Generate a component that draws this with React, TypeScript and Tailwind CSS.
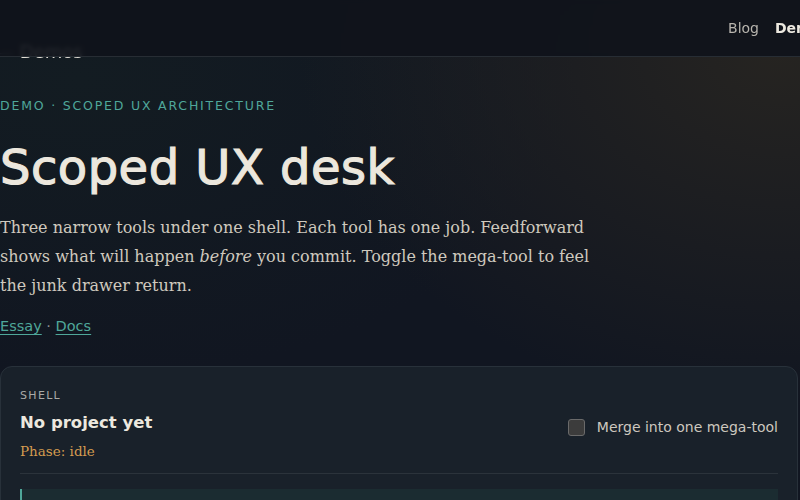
import React, { useState } from 'react'

const sans = "font-['DejaVu_Sans',sans-serif]"
const serif = "font-['DejaVu_Serif',serif]"

const Header: React.FC = () => (
  <div className="absolute top-0 left-0 right-0 h-[57px] bg-[#0f131b]/90 border-b border-[#272d34] backdrop-blur-[2px] flex items-center justify-end gap-4 overflow-hidden">
    <span className={`${sans} text-[14px] text-[#b8b5ae]`}>Blog</span>
    <span className={`${sans} text-[14px] font-bold text-[#ece8df] w-[25px] overflow-hidden whitespace-nowrap`}>Demos</span>
  </div>
)

const App: React.FC = () => {
  const [merged, setMerged] = useState(false)

  return (
    <div className="relative w-[800px] h-[500px] overflow-hidden bg-[#111621] bg-[radial-gradient(ellipse_480px_360px_at_780px_50px,#262421_0%,rgba(17,22,33,0)_100%),radial-gradient(ellipse_500px_300px_at_80px_80px,#131c22_0%,rgba(17,22,33,0)_100%)]">
      <div className="flex flex-col">
        {/* back link, sits under the sticky header */}
        <div className={`${sans} text-[18px] text-[#e4e0d8] pt-[40px] leading-[24px] blur-[0.6px] -ml-[4px]`}>
          <span className="text-[#6d737a]">—</span> Demos
        </div>

        <div className={`${sans} mt-[34px] text-[12.5px] tracking-[0.145em] text-[#4fa79a] leading-[16px]`}>
          DEMO · SCOPED UX ARCHITECTURE
        </div>

        <h1 className={`${sans} mt-[26px] text-[48px] leading-[54px] font-normal text-[#ece7dd] tracking-[0.01em] [-webkit-text-stroke:1.2px_#ece7dd]`}>
          Scoped UX desk
        </h1>

        <p className={`${serif} mt-[19px] text-[16px] leading-[29px] text-[#cfc9be] w-[610px]`}>
          Three narrow tools under one shell. Each tool has one job. Feedforward shows what will happen <em>before</em> you commit. Toggle the mega-tool to feel the junk drawer return.
        </p>

        <div className={`${sans} mt-[16px] text-[14.5px] text-[#4fa79a] leading-[20px]`}>
          <a className="underline underline-offset-[3px] decoration-[#4fa79a]">Essay</a>
          <span className="text-[#8a8f94]"> · </span>
          <a className="underline underline-offset-[3px] decoration-[#4fa79a]">Docs</a>
        </div>

        {/* shell card */}
        <div className="mt-[30px] w-[798px] rounded-xl border border-[#28313a] bg-[#19212a] px-[19px] pt-[22px]">
          <div className={`${sans} text-[11px] tracking-[0.12em] text-[#a9aaa7] leading-[14px]`}>SHELL</div>
          <div className="flex items-start justify-between">
            <div>
              <div className={`${sans} mt-[9px] text-[16.5px] font-bold text-[#ece8df] leading-[22px]`}>No project yet</div>
              <div className={`${serif} mt-[8px] text-[13.5px] text-[#d49c50] leading-[18px]`}>Phase: idle</div>
            </div>
            <label className="mt-[15px] flex items-center gap-[12px] cursor-pointer">
              <span
                onClick={() => setMerged(!merged)}
                className="w-[17px] h-[17px] rounded-[3px] border border-[#6a6a6a] bg-[#3c3c3c]"
              >
                {merged && <span className="block text-[12px] leading-[15px] text-center text-white">✓</span>}
              </span>
              <span className={`${sans} text-[14px] text-[#cdc8bf] leading-[18px]`}>Merge into one mega-tool</span>
            </label>
          </div>
          <div className="mt-[13px] h-px bg-[#2b333b]" />
          <div className="mt-[15px] h-[40px] border-l-2 border-[#4fa79a] bg-[#1b2c31]" />
        </div>
      </div>
      <Header />
    </div>
  )
}

export default App
